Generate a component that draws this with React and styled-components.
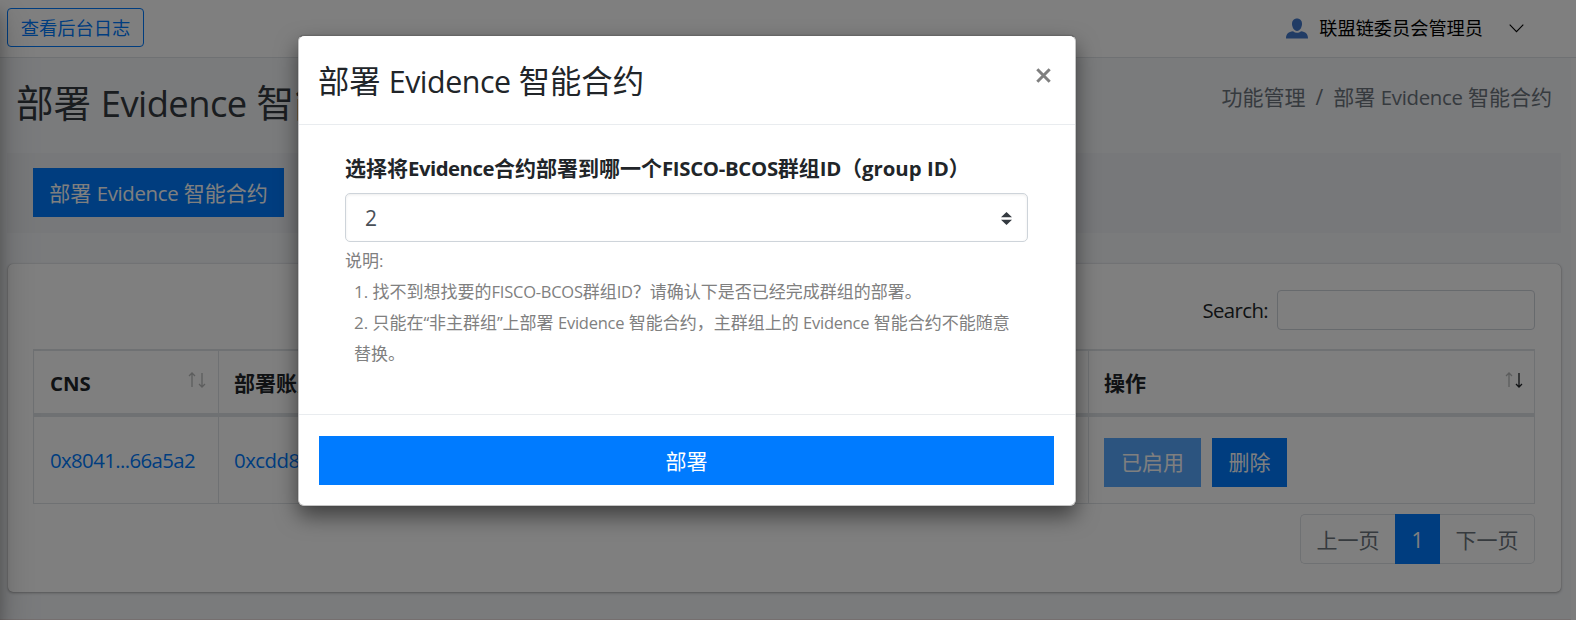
import React from 'react';
import styled, { createGlobalStyle } from 'styled-components';

const GlobalStyle = createGlobalStyle`
  *, *::before, *::after { box-sizing: border-box; }
  body {
    margin: 0;
    background: #fafafa;
    color: #212529;
    font-family: "Open Sans", "Noto Sans CJK SC", sans-serif;
    font-size: 21px;
    line-height: 31px;
  }
  button, input { font: inherit; }
`;

const Screen = styled.div`
  position: relative;
  width: 1576px;
  height: 620px;
  overflow: hidden;
`;

const Page = styled.div`
  width: 1571px;
  height: 620px;
  background: #f4f6f9;
  border-bottom: 1px solid #eadfdf;
  white-space: nowrap;
`;

const SidebarEdge = styled.div`
  position: absolute;
  top: 0;
  left: -325px;
  width: 325px;
  height: 620px;
  box-shadow: 0 18px 36px rgba(0, 0, 0, 0.25), 0 13px 13px rgba(0, 0, 0, 0.22);
`;

const Latin = styled.span`
  font-size: 0.97em;
  letter-spacing: ${(p) => p.$track || '-0.015em'};
`;

const Navbar = styled.header`
  width: 1576px;
  height: 58px;
  display: flex;
  align-items: center;
  justify-content: space-between;
  padding: 0 52px 2px 7px;
  background: #fff;
  border-bottom: 1px solid #dee2e6;
`;

const LogButton = styled.button`
  width: 137px;
  height: 39px;
  padding: 0;
  border: 1px solid #007bff;
  border-radius: 4px;
  background: transparent;
  color: #007bff;
  font-size: 18.3px;
  line-height: 27px;
`;

const Account = styled.div`
  display: flex;
  align-items: center;
  padding-top: 1px;
  color: #000;
  font-size: 18.2px;
  line-height: 27px;

  span { margin: 0 26px 0 11px; }
`;

const ContentHeader = styled.div`
  height: 95px;
  display: flex;
  justify-content: space-between;
  padding: 20px 19px 0 16px;
`;

const PageTitle = styled.h1`
  margin: 0;
  color: #343a40;
  font-size: 37.5px;
  font-weight: 400;
  line-height: 50px;
`;

const Breadcrumb = styled.nav`
  display: flex;
  gap: 10px;
  padding-top: 4px;
  color: #6c757d;
`;

const Toolbar = styled.div`
  height: 80px;
  margin: 0 10px 31px 7px;
  padding: 15px 26px;
  background: #eff1f4;
`;

const PrimaryButton = styled.button`
  width: ${(p) => p.$width || '100%'};
  height: 49px;
  padding: 1px 0 0;
  border: 0;
  background: #007bff;
  color: #fff;
  opacity: ${(p) => (p.$muted ? 0.65 : 1)};
`;

const Card = styled.section`
  height: 328px;
  margin: 0 10px 0 8px;
  padding: 26px 26px 0 25px;
  border-radius: 5px;
  background: #fff;
  box-shadow: 0 0 1px rgba(0, 0, 0, 0.3), 0 1px 3px rgba(0, 0, 0, 0.3);
`;

const SearchRow = styled.label`
  display: flex;
  justify-content: flex-end;
  align-items: center;
  gap: 9px;
  margin-bottom: 19px;
`;

const SearchInput = styled.input`
  width: 258px;
  height: 40px;
  border: 1px solid #ced4da;
  border-radius: 4px;
  background: #fff;
`;

const Grid = styled.div`
  border: 1px solid #dee2e6;
  border-top-width: 2px;
`;

const GridRow = styled.div`
  display: grid;
  grid-template-columns: 185px 870px 1fr;
  height: ${(p) => (p.$head ? '66px' : '86px')};
  border-bottom: ${(p) => (p.$head ? '4px solid #dee2e6' : '0')};
  font-weight: ${(p) => (p.$head ? 700 : 400)};
`;

const Cell = styled.div`
  display: flex;
  align-items: center;
  justify-content: ${(p) => (p.$spread ? 'space-between' : 'flex-start')};
  gap: 11px;
  padding: ${(p) => p.$top || '2px'} 12px 0 16px;
  border-right: 1px solid #dee2e6;
  overflow: hidden;

  & + & { padding-left: 15px; }
  &:last-child { border-right: 0; padding-right: 11px; }
`;

const CellLink = styled.a`
  color: #007bff;
`;

const SortArrows = styled.svg`
  margin-bottom: 6px;
`;

const Pager = styled.nav`
  display: flex;
  justify-content: flex-end;
  margin-top: 10px;
`;

const PagerItem = styled.span`
  width: ${(p) => (p.$active ? '45px' : '95px')};
  height: 50px;
  border: 1px solid ${(p) => (p.$active ? '#007bff' : '#dee2e6')};
  border-left-width: ${(p) => (p.$last ? 0 : '1px')};
  border-right-width: ${(p) => (p.$first ? 0 : '1px')};
  border-radius: ${(p) => (p.$first ? '5px 0 0 5px' : p.$last ? '0 5px 5px 0' : 0)};
  background: ${(p) => (p.$active ? '#007bff' : '#fff')};
  color: ${(p) => (p.$active ? '#fff' : '#6c757d')};
  text-align: center;
  line-height: 51px;
`;

const Backdrop = styled.div`
  position: absolute;
  inset: 0;
  display: flex;
  align-items: flex-start;
  padding: 35px 0 0 298px;
  background: rgba(0, 0, 0, 0.5);
`;

const Dialog = styled.div`
  width: 778px;
  height: 471px;
  border: 1px solid #c4c4c4;
  border-top-color: #666;
  border-radius: 6px;
  background: #fff;
  box-shadow: 0 10px 21px rgba(0, 0, 0, 0.5), 0 0 1px rgba(0, 0, 0, 0.4);
`;

const DialogHeader = styled.div`
  height: 89px;
  display: flex;
  justify-content: space-between;
  padding: 22px 24px 0 19px;
  border-bottom: 1px solid #e9ecef;
`;

const DialogTitle = styled.h4`
  margin: 0;
  font-size: 31.3px;
  font-weight: 400;
  line-height: 47px;
`;

const CloseIcon = styled.svg`
  margin-top: 10px;
`;

const DialogBody = styled.div`
  height: 289px;
  padding: 28px 47px 0 46px;
`;

const FieldLabel = styled.div`
  margin-bottom: 9px;
  font-weight: 700;
`;

const Select = styled.div`
  height: 49px;
  display: flex;
  align-items: center;
  justify-content: space-between;
  margin-bottom: 3px;
  padding: 1px 15px 0 19px;
  border: 1px solid #ced4da;
  border-radius: 5px;
  box-shadow: inset 0 1px 3px rgba(0, 0, 0, 0.075);
  color: #495057;
`;

const Help = styled.div`
  color: #808080;
  font-size: 17px;
  line-height: 31px;

  p { margin: 0 0 0 9px; white-space: nowrap; }
`;

const DialogFooter = styled.div`
  padding: 21px 21px 0 20px;
  border-top: 1px solid #e9ecef;
`;

const SortIcon = ({ down }) => (
  <SortArrows width="18" height="16" viewBox="0 0 18 16" fill="none" strokeWidth="1.3">
    <path d="M4 15V1.5M1 4L4 1L7 4" stroke="#b9babb" />
    <path d="M14 1V14.5M11 12L14 15L17 12" stroke={down ? '#212529' : '#b9babb'} />
  </SortArrows>
);

const ContractTitle = () => (
  <>部署 <Latin>Evidence</Latin> 智能合约</>
);

export default function App() {
  return (
    <Screen>
      <GlobalStyle />
      <Page>
        <Navbar>
          <LogButton>查看后台日志</LogButton>
          <Account>
            <svg width="22" height="21" viewBox="0 0 22 21" fill="#4378ca">
              <path d="M11 0.5C14 .5 16 2.6 16 5.8C16 9.2 14 13 11 13C8 13 6 9.2 6 5.8C6 2.6 8 .5 11 .5Z" />
              <path d="M0 20.5C0 15.5 2.5 14 7 13.2C9.5 15.2 12.5 15.2 15 13.2C19.5 14 22 15.5 22 20.5Z" />
            </svg>
            <span>联盟链委员会管理员</span>
            <svg width="15" height="9" viewBox="0 0 15 9" fill="none" stroke="#000" strokeWidth="1.1">
              <path d="M0.7 0.7L7.5 7.6L14.3 0.7" />
            </svg>
          </Account>
        </Navbar>
        <ContentHeader>
          <PageTitle><ContractTitle /></PageTitle>
          <Breadcrumb>
            <span>功能管理</span>
            <span>/</span>
            <span><ContractTitle /></span>
          </Breadcrumb>
        </ContentHeader>
        <Toolbar>
          <PrimaryButton $width="251px"><ContractTitle /></PrimaryButton>
        </Toolbar>
        <Card>
          <SearchRow>
            <Latin $track="-0.03em">Search:</Latin>
            <SearchInput />
          </SearchRow>
          <Grid>
            <GridRow $head>
              <Cell $spread><Latin $track="0">CNS</Latin><SortIcon /></Cell>
              <Cell>部署账户</Cell>
              <Cell $spread>操作<SortIcon down /></Cell>
            </GridRow>
            <GridRow>
              <Cell $top="0px"><CellLink><Latin $track="-0.03em">0x8041...66a5a2</Latin></CellLink></Cell>
              <Cell $top="0px"><CellLink><Latin $track="-0.025em">0xcdd8</Latin></CellLink></Cell>
              <Cell $top="4px">
                <PrimaryButton $width="97px" $muted>已启用</PrimaryButton>
                <PrimaryButton $width="75px">删除</PrimaryButton>
              </Cell>
            </GridRow>
          </Grid>
          <Pager>
            <PagerItem $first>上一页</PagerItem>
            <PagerItem $active>1</PagerItem>
            <PagerItem $last>下一页</PagerItem>
          </Pager>
        </Card>
      </Page>
      <SidebarEdge />
      <Backdrop>
        <Dialog>
          <DialogHeader>
            <DialogTitle><ContractTitle /></DialogTitle>
            <CloseIcon width="15" height="15" viewBox="0 0 15 15" stroke="#7f7f7f" strokeWidth="3">
              <path d="M1.3 1.3L13.7 13.7M13.7 1.3L1.3 13.7" />
            </CloseIcon>
          </DialogHeader>
          <DialogBody>
            <FieldLabel>
              选择将<Latin $track="-0.025em">Evidence</Latin>合约部署到哪一个<Latin>FISCO-BCOS</Latin>群组<Latin>ID</Latin>（<Latin $track="0">group ID</Latin>）
            </FieldLabel>
            <Select>
              2
              <svg width="11" height="13" viewBox="0 0 11 13" fill="#343a40">
                <path d="M0 5.2L5.5 0L11 5.2ZM0 7.8L5.5 13L11 7.8Z" />
              </svg>
            </Select>
            <Help>
              说明:
              <p>1. 找不到想找要的<Latin>FISCO-BCOS</Latin>群组<Latin>ID</Latin>？请确认下是否已经完成群组的部署。</p>
              <p>
                2. 只能在<Latin>“</Latin>非主群组<Latin>”</Latin>上部署 <Latin>Evidence</Latin> 智能合约，主群组上的 <Latin>Evidence</Latin> 智能合约不能随意
                <br />
                替换。
              </p>
            </Help>
          </DialogBody>
          <DialogFooter>
            <PrimaryButton>部署</PrimaryButton>
          </DialogFooter>
        </Dialog>
      </Backdrop>
    </Screen>
  );
}
